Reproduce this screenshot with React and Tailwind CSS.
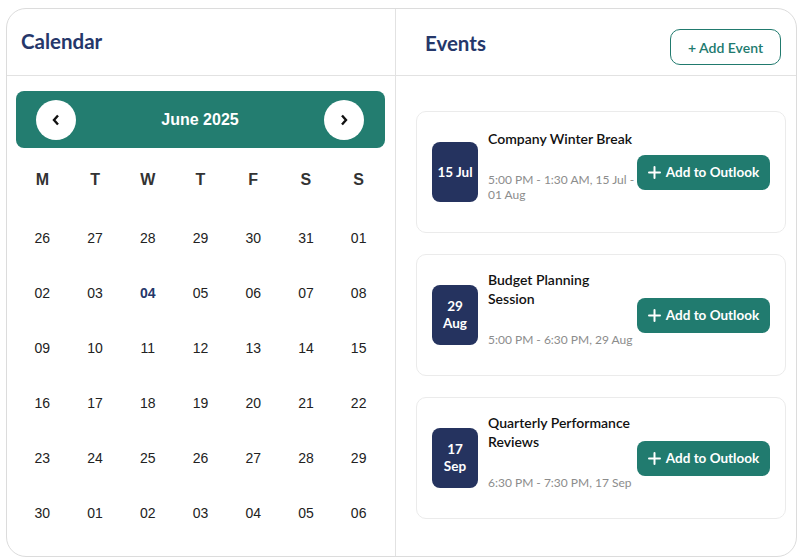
import React from "react";

const weeks = [
  ["26", "27", "28", "29", "30", "31", "01"],
  ["02", "03", "04", "05", "06", "07", "08"],
  ["09", "10", "11", "12", "13", "14", "15"],
  ["16", "17", "18", "19", "20", "21", "22"],
  ["23", "24", "25", "26", "27", "28", "29"],
  ["30", "01", "02", "03", "04", "05", "06"],
];

const days = ["M", "T", "W", "T", "F", "S", "S"];

const events = [
  { badge: ["15 Jul"], title: "Company Winter Break", time: "5:00 PM - 1:30 AM, 15 Jul - 01 Aug" },
  { badge: ["29", "Aug"], title: "Budget Planning Session", time: "5:00 PM - 6:30 PM, 29 Aug" },
  { badge: ["17", "Sep"], title: "Quarterly Performance Reviews", time: "6:30 PM - 7:30 PM, 17 Sep" },
];

function Chevron({ dir }) {
  return (
    <svg width="10" height="12" viewBox="0 0 10 12" fill="none">
      {dir === "left" ? (
        <polyline points="7,1.5 3,6 7,10.5" stroke="#111" strokeWidth="2.4" strokeLinejoin="miter" />
      ) : (
        <polyline points="3,1.5 7,6 3,10.5" stroke="#111" strokeWidth="2.4" strokeLinejoin="miter" />
      )}
    </svg>
  );
}

function PlusIcon() {
  return (
    <svg width="13" height="13" viewBox="0 0 13 13" fill="none">
      <path d="M6.5 1v11M1 6.5h11" stroke="#fff" strokeWidth="2" strokeLinecap="round" />
    </svg>
  );
}

export default function App() {
  return (
    <div className="w-[802px] h-[560px] bg-white pt-[8px] pl-[6px]">
      <div className="w-[791px] h-[549px] rounded-[20px] border border-[#dcdcdc] flex overflow-hidden">
        {/* Left column */}
        <div className="w-[389px] border-r border-[#e2e2e2] flex flex-col">
          <div className="h-[67px] border-b border-[#e2e2e2] flex items-center pl-[14px] pb-[1px]">
            <h2 className="text-[20.5px] font-bold text-[#25376a] font-['Lato',sans-serif] leading-none">Calendar</h2>
          </div>
          <div className="pl-[9px] pr-[10px] pt-[15px] font-['Liberation_Sans',Arial,sans-serif]">
            <div className="h-[57px] rounded-[8px] bg-[#237d70] flex items-center justify-between pl-[20px] pr-[21px]">
              <button className="w-[40px] h-[40px] rounded-full bg-white flex items-center justify-center">
                <Chevron dir="left" />
              </button>
              <div className="text-white font-bold text-[16px]">June 2025</div>
              <button className="w-[40px] h-[40px] rounded-full bg-white flex items-center justify-center">
                <Chevron dir="right" />
              </button>
            </div>
            <div className="grid grid-cols-7 mt-[12px] h-[40px] items-center">
              {days.map((d, i) => (
                <div key={i} className="text-center text-[16px] font-bold text-[#333]">{d}</div>
              ))}
            </div>
            <div className="mt-[11px]">
              {weeks.map((w, wi) => (
                <div key={wi} className="grid grid-cols-7 h-[55px] items-center">
                  {w.map((d, di) => {
                    const today = wi === 1 && di === 2;
                    return (
                      <div
                        key={di}
                        className={
                          today
                            ? "text-center text-[14px] font-bold text-[#25376a]"
                            : "text-center text-[14px] text-[#222]"
                        }
                      >
                        {d}
                      </div>
                    );
                  })}
                </div>
              ))}
            </div>
          </div>
        </div>

        {/* Right column */}
        <div className="flex-1 flex flex-col font-['Lato',sans-serif]">
          <div className="h-[67px] border-b border-[#e2e2e2] flex items-start justify-between pl-[29px] pr-[15px]">
            <h2 className="text-[20.5px] font-bold text-[#25376a] leading-none mt-[24px]">Events</h2>
            <button className="mt-[20px] w-[111px] h-[36px] rounded-[10px] border border-[#217a6e] text-[#217a6e] text-[14px] font-semibold flex items-center justify-center">
              + Add Event
            </button>
          </div>
          <div className="pl-[20px] pr-[10px] pt-[35px] flex flex-col gap-[21px]">
            {events.map((e, i) => (
              <div key={i} className="h-[122px] rounded-[10px] border border-[#ebebeb] flex items-center px-[15px]">
                <div className="w-[46px] h-[60px] rounded-[8px] bg-[#25335f] text-white font-bold text-[13.5px] leading-[17px] flex flex-col items-center justify-center text-center">
                  {e.badge.map((b, bi) => (
                    <span key={bi}>{b}</span>
                  ))}
                </div>
                <div className="w-[149px] ml-[10px] pb-[13px]">
                  <div className="text-[14px] font-semibold text-[#111] leading-[19px] pr-[4px]">{e.title}</div>
                  <div className="mt-[24px] text-[12px] text-[#8c8c8c] leading-[15px]">{e.time}</div>
                </div>
                <button className="w-[133px] h-[35px] rounded-[8px] bg-[#217b6f] text-white text-[13.5px] font-bold flex items-center justify-center gap-[5px]">
                  <PlusIcon />
                  Add to Outlook
                </button>
              </div>
            ))}
          </div>
        </div>
      </div>
    </div>
  );
}
